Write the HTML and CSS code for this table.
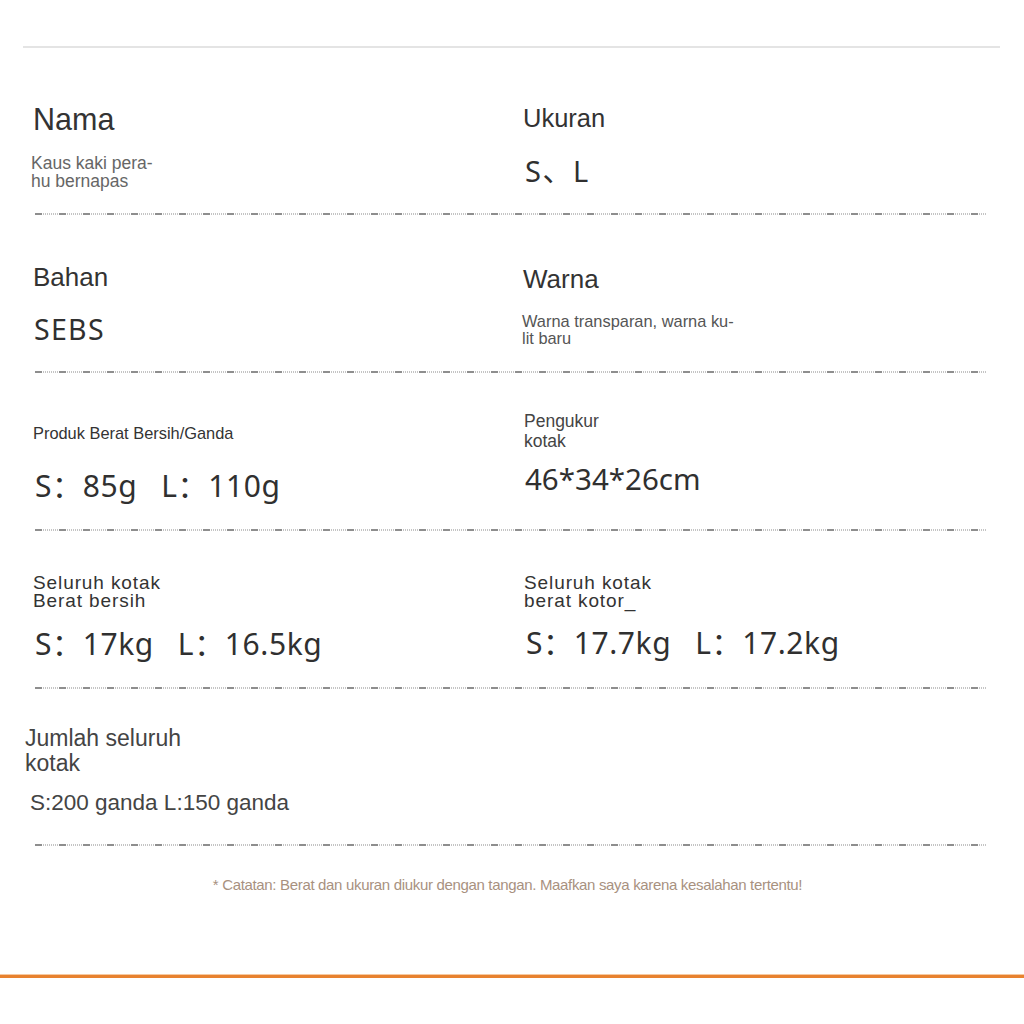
FILE: index.html
```html
<!DOCTYPE html>
<html lang="id">
<head>
<meta charset="utf-8">
<title>Spesifikasi</title>
<link rel="stylesheet" href="styles.css">
</head>
<body>
<div class="page">
  <div class="topline"></div>
  <section class="specs">
    <div class="row r1">
      <div class="cell left">
        <div class="lbl nama">Nama</div>
        <div class="sub kaus">Kaus kaki pera-<br>hu bernapas</div>
      </div>
      <div class="cell right">
        <div class="lbl ukuran">Ukuran</div>
        <div class="val sl">S、L</div>
      </div>
    </div>
    <div class="dash"></div>
    <div class="row r2">
      <div class="cell left">
        <div class="lbl bahan">Bahan</div>
        <div class="val sebs">SEBS</div>
      </div>
      <div class="cell right">
        <div class="lbl warna">Warna</div>
        <div class="sub wt">Warna transparan, warna ku-<br>lit baru</div>
      </div>
    </div>
    <div class="dash"></div>
    <div class="row r3">
      <div class="cell left">
        <div class="lbl produk">Produk Berat Bersih/Ganda</div>
        <div class="val big v85">S：85g&ensp; L：110g</div>
      </div>
      <div class="cell right">
        <div class="lbl peng">Pengukur<br>kotak</div>
        <div class="val v46">46*34*26cm</div>
      </div>
    </div>
    <div class="dash"></div>
    <div class="row r4">
      <div class="cell left">
        <div class="lbl sel">Seluruh kotak<br>Berat bersih</div>
        <div class="val big v17">S：17kg&ensp; L：16.5kg</div>
      </div>
      <div class="cell right">
        <div class="lbl sel">Seluruh kotak<br>berat kotor_</div>
        <div class="val big v177">S：17.7kg&ensp; L：17.2kg</div>
      </div>
    </div>
    <div class="dash"></div>
    <div class="row r5">
      <div class="cell left l5">
        <div class="lbl jumlah">Jumlah seluruh<br>kotak</div>
        <div class="sub v200">S:200 ganda L:150 ganda</div>
      </div>
      <div class="cell right"></div>
    </div>
    <div class="dash"></div>
  </section>
  <p class="note">* Catatan: Berat dan ukuran diukur dengan tangan. Maafkan saya karena kesalahan tertentu!</p>
  <div class="orange"></div>
</div>
</body>
</html>
```
FILE: styles.css
```css
html, body {
  margin: 0;
  padding: 0;
  background: #ffffff;
}

body {
  font-family: "Liberation Sans", Arial, sans-serif;
  color: #333333;
}

.page {
  width: 1024px;
  height: 1024px;
  overflow: hidden;
}

.topline {
  margin: 46px 24px 0 23px;
  height: 2px;
  background: #e4e4e4;
}

.row {
  display: grid;
  grid-template-columns: 522px 1fr;
}

.r1 { height: 165px; }
.r2, .r3, .r4 { height: 156px; }
.r5 { height: 155px; }

.cell {
  display: flex;
  flex-direction: column;
  align-items: flex-start;
}

.cell.left { padding-left: 33px; }
.cell.right { padding-left: 2px; }
.cell.left.l5 { padding-left: 24px; }

.dash {
  margin-left: 35px;
  width: 952px;
  height: 2px;
  background:
    repeating-linear-gradient(90deg, #8e8e8e 0 7px, transparent 7px 24px),
    repeating-linear-gradient(90deg, #c4c4c4 0 1px, transparent 1px 2px);
}

.lbl, .sub {
  font-family: "Liberation Sans", Arial, sans-serif;
  white-space: nowrap;
}

.val {
  font-family: "Noto Sans", "Noto Sans CJK SC", sans-serif;
  color: #303030;
  white-space: nowrap;
}

/* row 1 */
.nama { font-size: 30.5px; line-height: 34px; margin-top: 54px; color: #333; }
.kaus { font-size: 17.5px; line-height: 18px; margin-top: 18px; margin-left: -2px; color: #666; }
.ukuran { font-size: 25.5px; line-height: 29px; margin-top: 56px; margin-left: -1px; color: #333; }
.sl { font-size: 29px; line-height: 34px; margin-top: 21px; margin-left: 1px; letter-spacing: 1.5px; }

/* row 2 */
.bahan { font-size: 26px; line-height: 30px; margin-top: 47px; color: #333; }
.sebs { font-size: 28.5px; line-height: 34px; margin-top: 20px; margin-left: 1px; letter-spacing: 1.3px; }
.warna { font-size: 26px; line-height: 30px; margin-top: 49px; margin-left: -1px; color: #333; }
.wt { font-size: 16.4px; line-height: 17px; margin-top: 19px; margin-left: -2px; color: #555; }

/* row 3 */
.produk { font-size: 16.4px; line-height: 18px; margin-top: 51px; color: #333; }
.big { font-size: 30px; line-height: 34px; letter-spacing: 0.6px; }
.v85 { margin-top: 27px; margin-left: 2px; }
.peng { font-size: 17.5px; line-height: 19.5px; margin-top: 39px; color: #444; }
.v46 { font-size: 29.5px; line-height: 34px; margin-top: 11px; margin-left: 1px; }

/* row 4 */
.sel { font-size: 19px; line-height: 18px; letter-spacing: 0.9px; margin-top: 43px; color: #333; }
.v17 { margin-top: 17px; margin-left: 2px; }
.v177 { margin-top: 16px; margin-left: 2px; }

/* row 5 */
.jumlah { font-size: 23px; line-height: 25px; margin-top: 37px; margin-left: 1px; color: #444; }
.v200 { font-size: 22.5px; line-height: 26px; margin-top: 14px; margin-left: 6px; color: #444; }

.note {
  margin: 30px 0 0 0;
  padding-right: 9px;
  text-align: center;
  font-family: "Liberation Sans", Arial, sans-serif;
  font-size: 15px;
  line-height: 18px;
  letter-spacing: -0.33px;
  color: #a8917f;
}

.orange {
  margin-top: 81px;
  height: 3px;
  background: #e8822f;
  box-shadow: 0 -1px 0 #f6c9a0;
}
```
